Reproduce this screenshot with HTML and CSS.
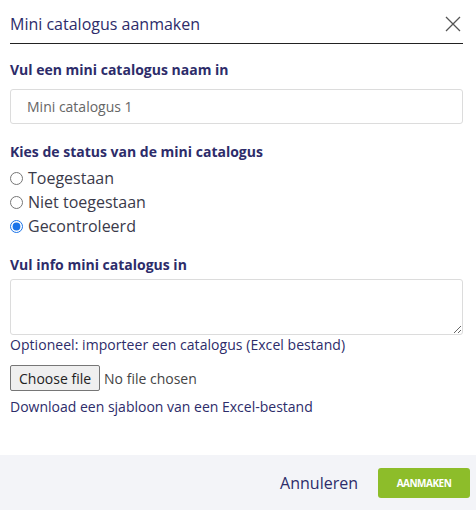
FILE: index.html
```html
<!DOCTYPE html>
<html lang="nl">
<head>
<meta charset="utf-8">
<title>Mini catalogus aanmaken</title>
<link rel="stylesheet" href="styles.css">
</head>
<body>
<div class="modal">
  <header class="modal-header">
    <h1 class="modal-title">Mini catalogus aanmaken</h1>
    <button class="close" aria-label="Sluiten">
      <svg width="16" height="16" viewBox="0 0 16 16"><path d="M1 1L15 15M15 1L1 15" stroke="#555" stroke-width="1.3" fill="none"/></svg>
    </button>
  </header>
  <div class="modal-body">
    <label class="field-label">Vul een mini catalogus naam in</label>
    <input class="text-input" type="text" value="Mini catalogus 1">

    <div class="field-label status-label">Kies de status van de mini catalogus</div>
    <div class="radios">
      <label class="radio"><input type="radio" name="status"> Toegestaan</label>
      <label class="radio"><input type="radio" name="status"> Niet toegestaan</label>
      <label class="radio"><input type="radio" name="status" checked> Gecontroleerd</label>
    </div>

    <label class="field-label info-label">Vul info mini catalogus in</label>
    <textarea class="textarea"></textarea>
    <div class="optional">Optioneel: importeer een catalogus (Excel bestand)</div>
    <div class="file-row">
      <button class="file-btn">Choose file</button>
      <span class="file-none">No file chosen</span>
    </div>
    <a class="download" href="#">Download een sjabloon van een Excel-bestand</a>
  </div>
  <footer class="modal-footer">
    <button class="cancel">Annuleren</button>
    <button class="create">AANMAKEN</button>
  </footer>
</div>
</body>
</html>
```

FILE: styles.css
```css
* { box-sizing: border-box; }
html, body { margin: 0; padding: 0; background: #fff; }
body { font-family: "Open Sans", "Liberation Sans", sans-serif; color: #2d2c6a; }
.modal { width: 476px; height: 510px; display: flex; flex-direction: column; }
.modal-header {
  margin: 0 13px 0 10px;
  height: 44px;
  border-bottom: 1px solid #222;
  display: flex;
  align-items: center;
  justify-content: space-between;
  padding-top: 4px;
}
.modal-title { margin: 0; font-size: 16px; font-weight: 400; color: #2d2c6a; }
.close { border: 0; background: none; padding: 0; width: 16px; height: 16px; margin-right: 2px; display: flex; }
.modal-body { padding: 16px 13px 0 10px; flex: 1; display: flex; flex-direction: column; align-items: flex-start; }
.field-label { font-size: 14px; font-weight: 700; color: #2d2c6a; line-height: 20px; display: block; }
.text-input {
  margin-top: 9px;
  width: 100%;
  height: 35px;
  border: 1px solid #dcdcdc;
  border-radius: 3px;
  padding: 0 16px;
  font-family: inherit;
  font-size: 14px;
  color: #666;
}
.status-label { margin-top: 18px; }
.radios { display: flex; flex-direction: column; margin-top: 4px; }
.radio { font-size: 16px; line-height: 24px; color: #3a3a4a; display: flex; align-items: center; }
.radio input { margin: 0 5px 0 0; width: 13px; height: 13px; accent-color: #1a73e8; }
.info-label { margin-top: 17px; }
.textarea {
  margin-top: 4px;
  width: 100%;
  height: 56px;
  border: 1px solid #dcdcdc;
  border-radius: 3px;
  resize: vertical;
  font-family: inherit;
}
.optional { font-size: 14px; line-height: 20px; margin-top: 0; color: #2d2c6a; letter-spacing: 0.05px; }
.file-row { margin-top: 10px; display: flex; align-items: center; gap: 4px; }
.file-btn {
  font-family: inherit;
  font-size: 14px;
  color: #222;
  background: #efefef;
  border: 1px solid #767676;
  border-radius: 2px;
  height: 26px;
  padding: 0 8px;
}
.file-none { font-size: 14px; color: #444; }
.download { margin-top: 6px; font-size: 14px; line-height: 20px; color: #2d2c6a; text-decoration: none; }
.modal-footer {
  height: 55px;
  background: #f3f4f8;
  display: flex;
  align-items: center;
  justify-content: flex-end;
  padding-right: 6px;
  gap: 20px;
}
.cancel { border: 0; background: none; font-family: inherit; font-size: 16px; color: #2d2c6a; padding: 0; }
.create {
  width: 92px;
  height: 30px;
  background: #8dbd2a;
  border: 0;
  border-radius: 3px;
  color: #fff;
  font-family: inherit;
  font-weight: 700;
  font-size: 10px;
  letter-spacing: -0.5px;
}
```
